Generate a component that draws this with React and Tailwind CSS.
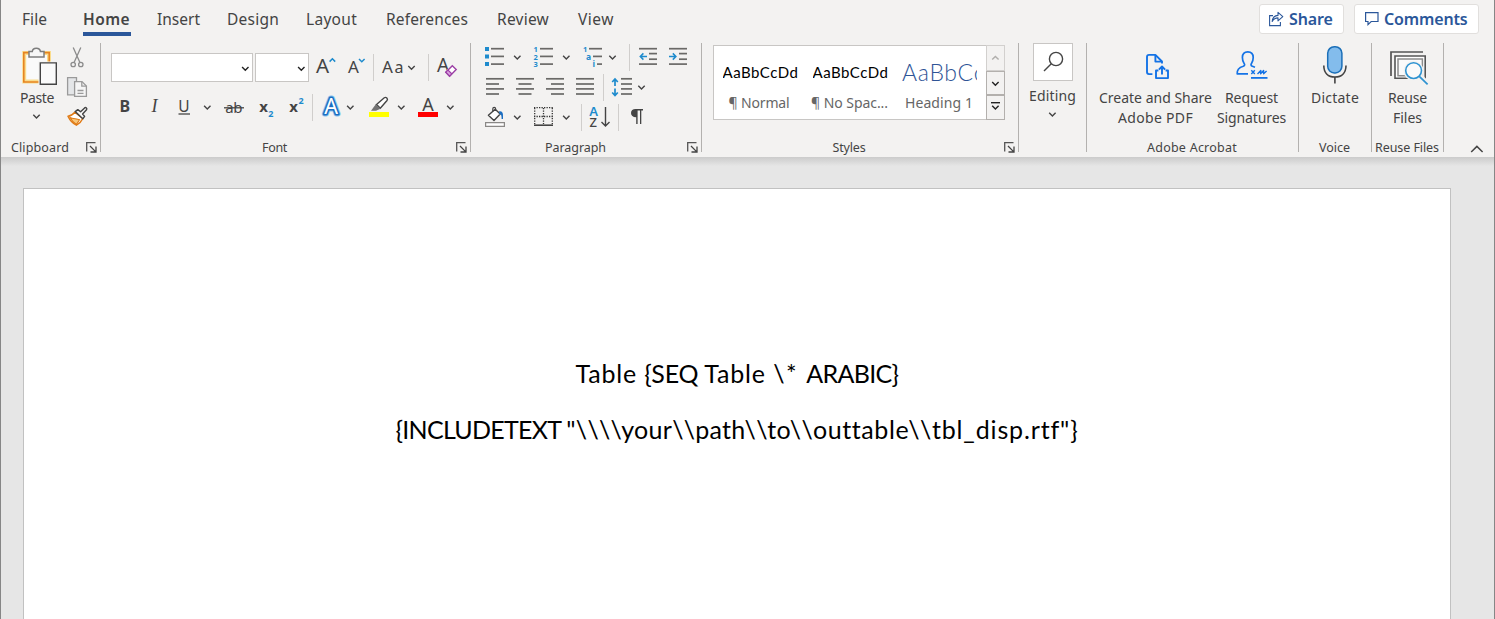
import React from "react";

const INK = "#444444";
const LINE = "#6a6967";
const BLUE = "#1e8bcd";
const NOTO = "'Noto Sans', sans-serif";

// Drawings share one coordinate space for the whole ribbon; each tile shows its own window of it.
function Tile({ x, y, w, h, children }) {
  return (
    <svg width={w} height={h} viewBox={`${x} ${y} ${w} ${h}`} className="block shrink-0 overflow-visible" fill="none">
      {children}
    </svg>
  );
}

function Chev({ x, y, c = "#444444" }) {
  return <path d={`M${x - 3.2} ${y - 1.6}l3.2 3.2 3.2-3.2`} stroke={c} strokeWidth="1.4" />;
}

function Lines({ d, c = LINE }) {
  return (
    <g stroke={c} strokeWidth="1.7">
      {d.map(([x1, x2, y], i) => (
        <path key={i} d={`M${x1} ${y}H${x2}`} />
      ))}
    </g>
  );
}

function Txt({ x, y, s, c = INK, w = 400, children, f = NOTO, ...rest }) {
  return (
    <text x={x} y={y} fontSize={s} fill={c} fontWeight={w} fontFamily={f} {...rest}>
      {children}
    </text>
  );
}

function Sep() {
  return <div className="h-[27px] w-px shrink-0 bg-[#d0cecc]" />;
}

function Launcher({ className }) {
  return (
    <svg width="11" height="11" viewBox="0 0 11 11" fill="none" className={`block shrink-0 ${className}`}>
      <path d="M.7 9.5V.7H9.5" stroke="#555" strokeWidth="1.3" />
      <path d="M4 4l5.6 5.6M10 4.5V10H4.5" stroke="#444" strokeWidth="1.3" />
    </svg>
  );
}

function Group({ className, label, labelClass = "", launcher, children }) {
  return (
    <section className={`flex h-[109px] shrink-0 flex-col border-r border-[#b3b1af] ${className}`}>
      <div className="h-[99px]">{children}</div>
      <div className="flex h-[10px] items-center">
        <span className={`flex-1 whitespace-nowrap pt-[2px] text-center text-[12.5px] leading-[10px] ${labelClass}`}>{label}</span>
        {launcher && <Launcher className={launcher} />}
      </div>
    </section>
  );
}

const tabs = [
  ["File", "w-[61px]", "tracking-[0.05px]"],
  ["Home", "w-[74px]", "font-semibold tracking-[0.44px]"],
  ["Insert", "w-[70px]", ""],
  ["Design", "w-[79px]", "tracking-[0.23px]"],
  ["Layout", "w-[80px]", "tracking-[0.29px]"],
  ["References", "w-[111px]", "tracking-[0.15px]"],
  ["Review", "w-[81px]", "tracking-[0.24px]"],
  ["View", "w-[50px]", "tracking-[0.5px]"],
];

function Header() {
  return (
    <header className="flex h-[38px] shrink-0 pl-[21px] pr-[15px]">
      {tabs.map(([t, w, cls]) => (
        <div key={t} className={`flex flex-col pt-[6px] ${w}`}>
          <span className={`whitespace-nowrap text-[15.5px] leading-[26px] ${cls}`}>{t}</span>
          {t === "Home" && <div className="h-1 w-12 bg-[#2b579a]" />}
        </div>
      ))}
      <div className="ml-auto flex gap-[10px] pt-1 text-[#2b579a]">
        <button className="flex h-[30px] w-[85px] items-center rounded-[3px] border border-[#e1dfdd] bg-white pl-[8px]">
          <Tile x={1268} y={10} w={21} h={18}>
            <g stroke="#2b579a" strokeWidth="1.1">
              <path d="M1273 15.6H1269.6V25.6H1280.4V22" />
              <path d="M1272.2 21.5C1272.6 17.5 1275 15.6 1278 15.4V12.3L1282.8 16.6 1278 20.8V17.9C1275.4 17.9 1273.6 19 1272.2 21.5Z" strokeLinejoin="round" />
            </g>
          </Tile>
          <span className="text-[16px] font-semibold leading-[28px] tracking-[-0.15px]">Share</span>
        </button>
        <button className="flex h-[30px] w-[125px] items-center rounded-[3px] border border-[#e1dfdd] bg-white pl-[8px]">
          <Tile x={1363} y={10} w={21} h={18}>
            <path d="M1365.6 12.6H1378V21.5H1371.2L1368 24.6V21.5H1365.6Z" stroke="#2b579a" strokeWidth="1.2" />
          </Tile>
          <span className="text-[16px] font-semibold leading-[28px] tracking-[-0.15px]">Comments</span>
        </button>
      </div>
    </header>
  );
}

function Clipboard() {
  return (
    <Group className="w-[100px]" label="Clipboard" labelClass="tracking-[0.12px] pr-[7px]" launcher="mr-[3px]">
      <div className="flex pl-4">
        <div className="flex w-10 flex-col items-center">
          <Tile x={17} y={43} w={40} h={45}>
            <path d="M24.2 53H49V81.5H24.2Z" fill="#fafafa" stroke="#fadc8c" strokeWidth="4" />
            <path d="M23.8 52.6H49.2V82H23.8Z" stroke="#e68422" strokeWidth="1.6" />
            <path d="M29 57V51.5H32.3C32.5 49.5 34 48.2 36.3 48.2S40.2 49.5 40.4 51.5H44V57Z" fill="#f6f6f6" stroke="#7d7d7d" strokeWidth="1.5" />
            <path d="M38.5 61.5H58V86H38.5Z" fill="#f3f2f1" />
            <path d="M40.3 62.9H56.3V84.3H40.3Z" fill="#fafafa" stroke="#444" strokeWidth="1.4" />
          </Tile>
          <span className="text-[14px] leading-5 tracking-[-0.4px]">Paste</span>
          <Tile x={17} y={108} w={40} h={16}>
            <Chev x={36.5} y={116.3} />
          </Tile>
        </div>
        <div className="flex flex-col pl-2">
          <Tile x={65} y={43} w={26} h={29}>
            <g stroke="#8c8c8c" strokeWidth="1.3">
              <path d="M73.2 47.5L79.8 62.3M80.8 47.5L74.2 62.3" />
              <circle cx="73.2" cy="64.5" r="2.2" />
              <circle cx="80.8" cy="64.5" r="2.2" />
            </g>
          </Tile>
          <Tile x={65} y={72} w={26} h={30}>
            <g stroke="#9a9a9a" strokeWidth="1.3">
              <path d="M74 94.8H67.6V77.6H76.5V81" fill="#e4e6e8" />
              <path d="M74.6 81.6H82L86.4 86V96.4H74.6Z" fill="#f5f5f5" />
              <path d="M81.8 81.8V86.2H86.2M77.5 90.5H83.5M77.5 93.3H83.5" />
            </g>
          </Tile>
          <Tile x={65} y={102} w={26} h={28}>
            <path d="M74.8 112.2C72.5 115 70.5 116 68 116.2C70 120.5 73 123.5 76.4 125.2C79.2 123.5 81.5 121.5 82.8 118.5Z" fill="#fff" stroke="#e07b16" strokeWidth="1.5" strokeLinejoin="round" />
            <path d="M70 117.5C73.5 119 77 118.5 79.5 119.8L76.4 124.5C73.5 122.5 71.5 120.5 70 117.5Z" fill="#f8c77a" stroke="#e07b16" strokeWidth="1.1" />
            <path d="M75.2 111.6L77.8 109.6L80.6 111.8L84.6 107.9C85.8 106.9 87.5 108.4 86.5 109.8L82.6 114L84.6 116.4L82.8 118.8Z" fill="#f8f8f8" stroke="#444" strokeWidth="1.4" strokeLinejoin="round" />
          </Tile>
        </div>
      </div>
    </Group>
  );
}

function FontGroup() {
  return (
    <Group className="w-[370px]" label="Font" labelClass="pr-[8px] tracking-[-0.32px]" launcher="mr-[3px]">
      <div className="flex items-center pl-[10px] pt-[10px]">
        <div className="mr-[2px] flex h-[29px] w-[142px] items-center justify-end border border-[#c8c6c4] bg-white">
          <Tile x={237} y={60} w={15} h={16}>
            <Chev x={245.3} y={68.6} c="#222" />
          </Tile>
        </div>
        <div className="flex h-[29px] w-[54px] items-center justify-end border border-[#c8c6c4] bg-white">
          <Tile x={293} y={60} w={15} h={16}>
            <Chev x={301.3} y={68.6} c="#222" />
          </Tile>
        </div>
        <Tile x={309} y={53} w={33} h={29}>
          <Txt x={316} y={73} s={20.5}>A</Txt>
          <path d="M329.6 61.6L332.4 58.8L335.2 61.6" stroke={BLUE} strokeWidth="1.5" />
        </Tile>
        <Tile x={342} y={53} w={31} h={29}>
          <Txt x={348} y={73} s={17}>A</Txt>
          <path d="M359 59L361.8 61.8L364.6 59" stroke={BLUE} strokeWidth="1.5" />
        </Tile>
        <Sep />
        <Tile x={374} y={53} w={54} h={29}>
          <Txt x={382} y={73} s={17}>A</Txt>
          <Txt x={394.5} y={73} s={16}>a</Txt>
          <Chev x={411.5} y={67.6} />
        </Tile>
        <Sep />
        <Tile x={429} y={53} w={30} h={29}>
          <Txt x={437} y={72} s={19}>A</Txt>
          <path d="M444.6 72L452.6 64.4L457.2 69L449.2 77Z" fill="#f3f2f1" />
          <path d="M445.8 72.2L452.3 65.7L456.2 69.4L449.6 76.2Z" fill="#fff" stroke="#9b3fa5" strokeWidth="1.4" />
          <path d="M445.8 72.2L448 70L451.8 73.8L449.6 76.2Z" fill="#d9a0de" stroke="#9b3fa5" strokeWidth="1.2" />
        </Tile>
      </div>
      <div className="flex items-center pl-[10px] pt-[11px]">
        <Tile x={111} y={93} w={28} h={28}>
          <Txt x={119.5} y={112} s={16} w={700}>B</Txt>
        </Tile>
        <Tile x={139} y={93} w={30} h={28}>
          <Txt x={151.5} y={112} s={18} f="'Liberation Serif', serif" fontStyle="italic">I</Txt>
        </Tile>
        <Tile x={169} y={93} w={47} h={28}>
          <Txt x={178.3} y={111.5} s={15.5}>U</Txt>
          <path d="M178.5 114H190" stroke={INK} strokeWidth="1.3" />
          <Chev x={207.3} y={107.3} />
        </Tile>
        <Tile x={216} y={93} w={34} h={28}>
          <Txt x={225.3} y={112.8} s={15} letterSpacing="-0.5">ab</Txt>
          <path d="M224 107.8H244" stroke={INK} strokeWidth="1.3" />
        </Tile>
        <Tile x={250} y={93} w={30} h={28}>
          <Txt x={259.3} y={112} s={15} w={700}>x</Txt>
          <Txt x={268.2} y={116.5} s={9} w={700} c={BLUE}>2</Txt>
        </Tile>
        <Tile x={280} y={93} w={32} h={28}>
          <Txt x={289.3} y={112} s={15} w={700}>x</Txt>
          <Txt x={298.4} y={103.5} s={9} w={700} c={BLUE}>2</Txt>
        </Tile>
        <Sep />
        <Tile x={313} y={93} w={47} h={28}>
          <Txt x={324.2} y={114} s={21.5} stroke="#8ec7f0" strokeWidth="5" strokeLinejoin="round">A</Txt>
          <Txt x={324.2} y={114} s={21.5} stroke="#1b6ec2" strokeWidth="3.2" strokeLinejoin="round">A</Txt>
          <Txt x={324.2} y={114} s={21.5} c="#ffffff">A</Txt>
          <Chev x={350.3} y={107.3} />
        </Tile>
        <Tile x={360} y={93} w={50} h={28}>
          <path d="M376.5 104.5L384.3 97.8C386 96.6 388.4 98.8 387 100.5L380.3 108.2Z" fill="#fff" stroke="#444" strokeWidth="1.4" />
          <path d="M375.8 104.2L380.6 108.8L376 110.8H371Z" fill="#737373" />
          <path d="M369 112H389V117H369Z" fill="#ffff00" />
          <Chev x={401.3} y={107.3} />
        </Tile>
        <Tile x={410} y={93} w={50} h={28}>
          <Txt x={422.3} y={110.5} s={18}>A</Txt>
          <path d="M418 112H438V117H418Z" fill="#ff0000" />
          <Chev x={450.3} y={107.3} />
        </Tile>
      </div>
    </Group>
  );
}

function Paragraph() {
  return (
    <Group className="w-[231px]" label="Paragraph" labelClass="pr-[7px] tracking-[-0.06px]" launcher="mr-[3px]">
      <div className="flex pl-[5px] pt-[1px]">
        <Tile x={476} y={44} w={49} h={27}>
          <path d="M485 47H489V51H485ZM485 54.5H489V58.5H485ZM485 62H489V66H485Z" fill={BLUE} />
          <Lines d={[[491, 504, 48.7], [491, 504, 56.4], [491, 504, 64.1]]} />
          <Chev x={517.3} y={57.3} />
        </Tile>
        <Tile x={525} y={44} w={50} h={27}>
          <Txt x={533.5} y={52.2} s={7.5} w={700} c={BLUE}>1</Txt>
          <Txt x={533.5} y={59.8} s={7.5} w={700} c={BLUE}>2</Txt>
          <Txt x={533.5} y={67.2} s={7.5} w={700} c={BLUE}>3</Txt>
          <Lines d={[[540, 553, 48.7], [540, 553, 56.4], [540, 553, 64.1]]} />
          <Chev x={566.3} y={57.3} />
        </Tile>
        <Tile x={575} y={44} w={54} h={27}>
          <Txt x={583} y={52.2} s={7.5} w={700} c={BLUE}>1</Txt>
          <Txt x={586} y={59.8} s={8.5} w={700} c={BLUE}>a</Txt>
          <Txt x={592.5} y={67.2} s={8.5} w={700} c={BLUE}>i</Txt>
          <Lines d={[[589, 602, 48.7], [593, 602, 56.4], [597, 602, 64.1]]} />
          <Chev x={612.5} y={57.3} />
        </Tile>
        <Sep />
        <Tile x={630} y={44} w={33} h={27}>
          <Lines d={[[639, 657, 48.7], [649, 657, 53.6], [649, 657, 59.2], [639, 657, 64.1]]} />
          <path d="M647 56.5H640.6M643.4 53.4L640.3 56.5L643.4 59.6" stroke={BLUE} strokeWidth="1.5" />
        </Tile>
        <Tile x={663} y={44} w={30} h={27}>
          <Lines d={[[669, 687, 48.7], [679, 687, 53.6], [679, 687, 59.2], [669, 687, 64.1]]} />
          <path d="M669 56.5H675.6M672.8 53.4L675.9 56.5L672.8 59.6" stroke={BLUE} strokeWidth="1.5" />
        </Tile>
      </div>
      <div className="flex pl-[5px] pt-[3px]">
        <Tile x={476} y={74} w={34} h={27}>
          <Lines d={[[486, 504, 78.8], [486, 499, 84], [486, 504, 88.9], [486, 499, 94]]} />
        </Tile>
        <Tile x={510} y={74} w={30} h={27}>
          <Lines d={[[516, 534, 78.8], [518.5, 531.5, 84], [516, 534, 88.9], [518.5, 531.5, 94]]} />
        </Tile>
        <Tile x={540} y={74} w={30} h={27}>
          <Lines d={[[546, 564, 78.8], [551, 564, 84], [546, 564, 88.9], [551, 564, 94]]} />
        </Tile>
        <Tile x={570} y={74} w={33} h={27}>
          <Lines d={[[576, 594, 78.8], [576, 594, 84], [576, 594, 88.9], [576, 594, 94]]} />
        </Tile>
        <Sep />
        <Tile x={604} y={74} w={46} h={27}>
          <Lines d={[[621, 632, 78.8], [621, 632, 84], [621, 632, 88.9], [621, 632, 94]]} />
          <path d="M615 79V86M612.2 82L615 79L617.8 82M615 88.5V95.5M612.2 92.5L615 95.5L617.8 92.5" stroke={BLUE} strokeWidth="1.7" />
          <Chev x={641.5} y={87.3} />
        </Tile>
      </div>
      <div className="flex pl-[5px] pt-[3px]">
        <Tile x={476} y={104} w={49} h={27}>
          <path d="M488.4 115.3L495.2 109.2L500.2 114L494 120.6Z" fill="#fff" stroke="#444" strokeWidth="1.4" strokeLinejoin="round" />
          <path d="M492.8 111.5V108.7C492.8 107 495.6 107 495.6 108.7V111" stroke="#444" strokeWidth="1.2" />
          <path d="M499 111.5C501.5 110.8 503.4 112.5 503 116V119H501.6C501.6 116 501.5 114.5 499.5 114Z" fill="#1b6ec2" />
          <path d="M485.6 122.6H504.4V126.4H485.6Z" fill="#fff" stroke="#8a8886" strokeWidth="1.2" />
          <Chev x={517.3} y={117.3} />
        </Tile>
        <Tile x={525} y={104} w={56} h={27}>
          <path d="M534 107.7H553M534 116.5H553M534.7 108V124M543.5 108V124M552.3 108V124" stroke="#333" strokeWidth="1.3" strokeDasharray="1.3 1.2" />
          <path d="M534 125.2H553" stroke="#444" strokeWidth="1.6" />
          <Chev x={566.3} y={117.3} />
        </Tile>
        <Sep />
        <Tile x={582} y={104} w={36} h={27}>
          <Txt x={589.3} y={116} s={13} w={600} c={BLUE}>A</Txt>
          <Txt x={589.6} y={127.3} s={13} w={500}>Z</Txt>
          <path d="M605.5 107V126M601.5 122L605.5 126L609.5 122" stroke="#444" strokeWidth="1.4" />
        </Tile>
        <Sep />
        <Tile x={619} y={104} w={30} h={27}>
          <path d="M635.5 109H643V110.4H641.3V124H640V110.4H637.6V124H636.2V117.2C632.8 117.2 631 115.6 631 113S632.8 109 635.5 109Z" fill={INK} />
        </Tile>
      </div>
    </Group>
  );
}

const styleItems = [
  ["AaBbCcDd", "¶ Normal", "text-[15px] tracking-[0.5px] text-black", "tracking-[-0.16px] -ml-[2px]"],
  ["AaBbCcDd", "¶ No Spac...", "text-[15px] tracking-[0.5px] text-black", "tracking-[-0.06px] -ml-px"],
  ["AaBbCc", "Heading 1", "-ml-px text-[23px] font-light tracking-[0.7px] text-[#2f5496]", "tracking-[0.08px] -ml-[2px]"],
];

function Styles() {
  return (
    <Group className="w-[317px]" label="Styles" labelClass="pl-[3px] pr-[11px] tracking-[-0.17px]" launcher="mr-[3px]">
      <div className="flex pl-[11px] pt-[2px]">
        <div className="flex h-[75px] w-[273px] border border-r-0 border-[#c8c6c4] bg-white pl-[1px] pt-[11px]">
          {styleItems.map(([p, n, pc, nc], i) => (
            <div key={i} className="flex w-[90px] shrink-0 flex-col items-center px-[7px]">
              <div className={`flex h-[30px] w-[75px] items-center overflow-hidden whitespace-nowrap font-[Lato,sans-serif] leading-[30px] ${pc}`}>{p}</div>
              <div className={`mt-[6px] whitespace-nowrap text-[14px] leading-5 text-[#666666] ${nc}`}>{n}</div>
            </div>
          ))}
        </div>
        <div className="flex w-[19px] flex-col">
          <div className="h-[26px] border border-[#d2d0ce] bg-[#f3f2f1]">
            <Tile x={987} y={46} w={17} h={24}>
              <path d="M992.2 59.6L995.4 56.4L998.6 59.6" stroke="#b0aeac" strokeWidth="1.4" />
            </Tile>
          </div>
          <div className="h-[24px] border border-[#b3b0ad] bg-[#f3f2f1]">
            <Tile x={987} y={72} w={17} h={22}>
              <Chev x={995.4} y={83.6} c="#222" />
            </Tile>
          </div>
          <div className="h-[25px] border border-[#b3b0ad] bg-[#f3f2f1]">
            <Tile x={987} y={96} w={17} h={23}>
              <path d="M991 102.7H1000" stroke="#222" strokeWidth="1.4" />
              <Chev x={995.4} y={107.4} c="#222" />
            </Tile>
          </div>
        </div>
      </div>
    </Group>
  );
}

function Editing() {
  return (
    <Group className="w-[68px]" label="">
      <div className="flex flex-col items-center">
        <div className="h-[38px] w-10 border border-[#c8c6c4] bg-white">
          <Tile x={1034} y={44} w={38} h={36}>
            <circle cx="1056" cy="59" r="6.6" stroke="#444" strokeWidth="1.4" />
            <path d="M1051.3 63.7L1044 71" stroke="#444" strokeWidth="1.4" />
          </Tile>
        </div>
        <span className="mt-[5px] text-[14px] leading-5 tracking-[0.15px]">Editing</span>
        <Tile x={1032} y={106} w={42} h={16}>
          <Chev x={1052.4} y={114.4} />
        </Tile>
      </div>
    </Group>
  );
}

function Acrobat() {
  return (
    <Group className="w-[212px]" label="Adobe Acrobat" labelClass="pr-[1px] tracking-[0.24px]">
      <div className="flex pl-[11px] text-[14px] leading-5">
        <div className="flex w-[115px] flex-col items-center whitespace-nowrap">
          <Tile x={1098} y={43} w={115} h={45}>
            <g stroke="#1473e6" strokeWidth="1.9" strokeLinejoin="round">
              <path d="M1152.4 74.1H1149C1147.6 74.1 1147 73.4 1147 72V57C1147 55.6 1147.6 54.9 1149 54.9H1155.4L1162 61.5V63.5" />
              <path d="M1155.4 55V61.6H1162" />
              <path d="M1158.4 70.5H1156V78.1H1168V70.5H1165.6" />
              <path d="M1162 74.5V66.8M1158.9 69.6L1162 66.5L1165.1 69.6" />
            </g>
          </Tile>
          <span>Create and Share</span>
          <span className="tracking-[0.32px]">Adobe PDF</span>
        </div>
        <div className="flex w-[77px] flex-col items-center whitespace-nowrap">
          <Tile x={1213} y={43} w={77} h={45}>
            <g stroke="#1473e6" strokeWidth="1.7" strokeLinejoin="round">
              <path d="M1248 73.9H1237.2C1236.8 69.6 1239.3 67.3 1243.3 66.2C1245 65.6 1244.9 64.4 1244 63.2C1242.7 61.4 1242.4 59.5 1242.4 57.6C1242.4 54 1244.6 51.9 1247.8 51.9S1253.2 54 1253.2 57.6C1253.2 59.5 1252.9 61.4 1251.6 63.2C1250.6 64.6 1250.9 65.9 1252.4 66.3L1255 67.2" />
              <path d="M1251.3 70.3L1254.8 74M1254.8 70.3L1251.3 74" strokeWidth="1.4" />
              <path d="M1257.5 74L1260.8 70.6L1260.6 73.8L1263.6 70.6L1263.6 73.8L1266.6 71" strokeWidth="1.4" />
              <path d="M1251 77.9H1267.5" strokeWidth="1.8" />
            </g>
          </Tile>
          <span className="tracking-[-0.07px]">Request</span>
          <span className="tracking-[-0.12px]">Signatures</span>
        </div>
      </div>
    </Group>
  );
}

function Voice() {
  return (
    <Group className="w-[73px]" label="Voice" labelClass="pr-[1px]">
      <div className="flex flex-col items-center text-[14px] leading-5">
        <Tile x={1299} y={43} w={72} h={45}>
          <rect x="1327.7" y="46.7" width="14.2" height="26.2" rx="6.6" fill="#83bcec" stroke="#1b6fb8" strokeWidth="1.5" />
          <path d="M1323.8 65.5C1323.8 73 1328.3 77 1334.9 77S1346 73 1346 65.5M1334.9 77V83.5" stroke="#444" strokeWidth="1.6" />
        </Tile>
        <span className="tracking-[0.23px]">Dictate</span>
      </div>
    </Group>
  );
}

function Reuse() {
  return (
    <Group className="w-[72px]" label="Reuse Files" labelClass="pr-[1px] tracking-[-0.07px]">
      <div className="flex flex-col items-center text-[14px] leading-5">
        <Tile x={1372} y={43} w={71} h={45}>
          <path d="M1391 76V52H1423" stroke="#555" strokeWidth="1.7" />
          <path d="M1395 78.2V56H1425.2V78.2Z" fill="#fff" stroke="#555" strokeWidth="1.6" />
          <path d="M1398 75.8V59H1422.4V75.8Z" fill="#fafafa" stroke="#8c8c8c" strokeWidth="1.5" />
          <circle cx="1413.6" cy="70.8" r="10" fill="#f3f2f1" />
          <path d="M1420 76L1428 84.5" stroke="#f3f2f1" strokeWidth="5" />
          <circle cx="1413.6" cy="70.6" r="7.9" fill="#fafafa" stroke="#2e93d1" strokeWidth="1.6" />
          <path d="M1419.3 76.3L1427.6 84.4" stroke="#2e93d1" strokeWidth="1.7" />
        </Tile>
        <span className="tracking-[-0.17px]">Reuse</span>
        <span>Files</span>
      </div>
    </Group>
  );
}

export default function App() {
  return (
    <div className="flex h-[619px] w-[1495px] flex-col overflow-hidden border-x border-[#868686] bg-[#e6e6e6] font-['Noto_Sans',sans-serif] text-[#444444]">
      <div className="h-[157px] shrink-0 bg-[#f3f2f1]">
        <Header />
        <div className="flex h-[119px] pt-[5px]">
          <Clipboard />
          <FontGroup />
          <Paragraph />
          <Styles />
          <Editing />
          <Acrobat />
          <Voice />
          <Reuse />
          <div className="flex flex-1 items-end pb-px pl-[24px]">
            <Tile x={1468} y={142} w={18} h={14}>
              <path d="M1471.2 152L1476.9 146.4L1482.6 152" stroke="#444" strokeWidth="1.5" />
            </Tile>
          </div>
        </div>
      </div>
      <div className="h-[9px] shrink-0 bg-gradient-to-b from-[#cbcbcb] to-[#e6e6e6]" />
      <main className="ml-[22px] mt-[22px] flex w-[1428px] flex-1 flex-col items-center border border-b-0 border-[#c1c1c1] bg-white pt-[168px] font-[Lato,sans-serif] text-[25px] leading-8 text-black">
        <p className="whitespace-pre">
          <span className="tracking-[0.83px]">{"Table "}</span>
          <span className="tracking-[-0.27px]">{"{SEQ "}</span>
          <span className="tracking-[0.83px]">{"Table "}</span>
          <span className="tracking-[1.6px]">{"\\* "}</span>
          <span className="tracking-[-0.67px]">{"ARABIC}"}</span>
        </p>
        <p className="mt-6 whitespace-pre">
          <span className="tracking-[-0.72px]">{"{INCLUDETEXT "}</span>
          <span className="tracking-[0.28px]">{'"\\\\\\\\your\\\\path\\\\to\\\\'}</span>
          <span className="tracking-[0.58px]">{"outtable\\\\"}</span>
          <span className="tracking-[0.85px]">{'tbl_disp.rtf"}'}</span>
        </p>
      </main>
    </div>
  );
}
